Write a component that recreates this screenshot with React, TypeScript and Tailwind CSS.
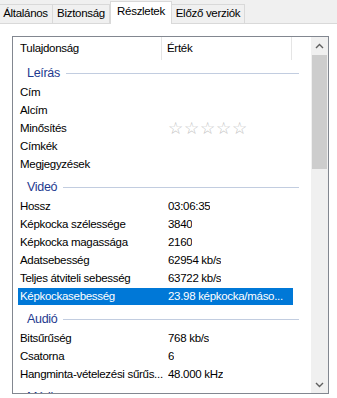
import React from 'react'

type Row = { label: string; value?: string; stars?: boolean; selected?: boolean }
type Group = { title: string; rows: Row[] }

const groups: Group[] = [
    {
        title: 'Leírás',
        rows: [
            { label: 'Cím' },
            { label: 'Alcím' },
            { label: 'Minősítés', stars: true },
            { label: 'Címkék' },
            { label: 'Megjegyzések' },
        ],
    },
    {
        title: 'Videó',
        rows: [
            { label: 'Hossz', value: '03:06:35' },
            { label: 'Képkocka szélessége', value: '3840' },
            { label: 'Képkocka magassága', value: '2160' },
            { label: 'Adatsebesség', value: '62954 kb/s' },
            { label: 'Teljes átviteli sebesség', value: '63722 kb/s' },
            { label: 'Képkockasebesség', value: '23.98 képkocka/máso...', selected: true },
        ],
    },
    {
        title: 'Audió',
        rows: [
            { label: 'Bitsűrűség', value: '768 kb/s' },
            { label: 'Csatorna', value: '6' },
            { label: 'Hangminta-vételezési sűrűs...', value: '48.000 kHz' },
        ],
    },
    {
        title: 'Média',
        rows: [{ label: 'Év' }],
    },
]

const tabs = [
    { name: 'Általános', w: 'w-[55px] -ml-[2px]' },
    { name: 'Biztonság', w: 'w-[57px]' },
    { name: 'Részletek', w: 'w-[62px]', active: true },
    { name: 'Előző verziók', w: 'w-[73px]' },
]

function Chevron({ up }: { up?: boolean }) {
    return (
        <svg width="9" height="6" viewBox="0 0 9 6" className={up ? '' : 'rotate-180'}>
            <path d="M1 5 L4.5 1.5 L8 5" fill="none" stroke="#606060" strokeWidth="1.4" />
        </svg>
    )
}

export default function App() {
    return (
        <div
            className="w-[337px] h-[398px] overflow-hidden bg-white text-[11.5px] tracking-[-0.3px] text-black"
            style={{ fontFamily: '"Liberation Sans", Arial, sans-serif' }}
        >
            <div className="h-[24px] bg-[#f0f0f0] border-b border-[#d9d9d9] flex items-end">
                {tabs.map(t =>
                    t.active ? (
                        <div
                            key={t.name}
                            className={`${t.w} h-[23px] -mb-px bg-white border border-b-0 border-[#d9d9d9] flex items-center justify-center pb-[2px]`}
                        >
                            {t.name}
                        </div>
                    ) : (
                        <div
                            key={t.name}
                            className={`${t.w} h-[20px] -mb-px border border-[#d9d9d9] border-l-0 first:border-l bg-[#f0f0f0] flex items-center justify-center pb-[1px]`}
                        >
                            {t.name}
                        </div>
                    )
                )}
            </div>

            <div className="pt-[12px] pl-[12px] pr-[8px]">
                <div className="h-[358px] border border-[#828790] flex overflow-hidden">
                    <div className="flex-1 overflow-hidden">
                        <div className="h-[23px] flex">
                            <div className="w-[149px] pl-[7px] flex items-center border-r border-[#e5e5e5]">
                                Tulajdonság
                            </div>
                            <div className="w-[130px] pl-[5px] flex items-center border-r border-[#e5e5e5]">
                                Érték
                            </div>
                        </div>
                        {groups.map(g => (
                            <div key={g.title}>
                                <div className="h-[24px] flex items-center pl-[14px] pr-[12px] pt-[2px]">
                                    <span className="text-[#1e3a8f] text-[12.5px] mr-[6px]">{g.title}</span>
                                    <div className="flex-1 h-px bg-[#c2cde0]" />
                                </div>
                                {g.rows.map(r => (
                                    <div key={r.label} className="h-[18px] flex">
                                        <div
                                            className={`ml-[5px] w-[275px] h-[17px] flex items-center ${
                                                r.selected ? 'bg-[#0078d7] text-white' : ''
                                            }`}
                                        >
                                            <div className="w-[150px] shrink-0 pl-[2px] pr-[2px] whitespace-nowrap overflow-hidden">
                                                {r.label}
                                            </div>
                                            {r.stars ? (
                                                <div className="flex gap-[1px] text-[#c4c4c4] text-[17px] tracking-normal leading-none -mt-[1px]">
                                                    <span>☆</span>
                                                    <span>☆</span>
                                                    <span>☆</span>
                                                    <span>☆</span>
                                                    <span>☆</span>
                                                </div>
                                            ) : (
                                                <div className="whitespace-nowrap overflow-hidden">{r.value}</div>
                                            )}
                                        </div>
                                    </div>
                                ))}
                            </div>
                        ))}
                    </div>
                    <div className="w-[17px] bg-[#f0f0f0] flex flex-col">
                        <div className="h-[17px] flex items-center justify-center">
                            <Chevron up />
                        </div>
                        <div className="flex-1 px-[1px] pt-[1px]">
                            <div className="h-[114px] bg-[#cdcdcd]" />
                        </div>
                        <div className="h-[17px] flex items-center justify-center">
                            <Chevron />
                        </div>
                    </div>
                </div>
            </div>
        </div>
    )
}
